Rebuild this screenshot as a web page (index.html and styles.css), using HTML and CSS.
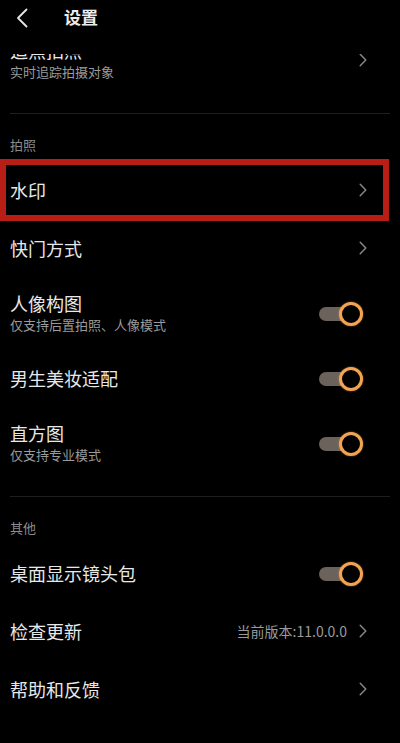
FILE: index.html
```html
<!DOCTYPE html>
<html lang="zh-CN">
<head>
    <meta charset="UTF-8">
    <meta name="viewport" content="width=device-width, initial-scale=1.0">
    <title>设置</title>
    <link rel="stylesheet" href="styles.css">
</head>
<body>

<div class="screen">
    <div class="topbar">
        <span class="back">
            <svg width="12" height="20" viewBox="0 0 12 20"><polyline points="10.5,1.5 2,10 10.5,18.5" fill="none" stroke="#e6e6e6" stroke-width="1.8" stroke-linecap="round" stroke-linejoin="round"/></svg>
        </span>
        <span class="title">设置</span>
    </div>

    <div class="list">
        <div class="section">
            <div class="row tall">
                <div class="text">
                    <div class="name">追焦拍照</div>
                    <div class="desc">实时追踪拍摄对象</div>
                </div>
                <span class="arrow"><svg width="8" height="14" viewBox="0 0 8 14"><polyline points="1.2,1.2 6.8,7 1.2,12.8" fill="none" stroke="#8a8a8a" stroke-width="1.4" stroke-linecap="round" stroke-linejoin="round"/></svg></span>
            </div>
        </div>

        <div class="section">
            <div class="section-title">拍照</div>
            <div class="row marked">
                <div class="text"><div class="name">水印</div></div>
                <span class="arrow"><svg width="8" height="14" viewBox="0 0 8 14"><polyline points="1.2,1.2 6.8,7 1.2,12.8" fill="none" stroke="#8a8a8a" stroke-width="1.4" stroke-linecap="round" stroke-linejoin="round"/></svg></span>
            </div>
            <div class="row">
                <div class="text"><div class="name">快门方式</div></div>
                <span class="arrow"><svg width="8" height="14" viewBox="0 0 8 14"><polyline points="1.2,1.2 6.8,7 1.2,12.8" fill="none" stroke="#8a8a8a" stroke-width="1.4" stroke-linecap="round" stroke-linejoin="round"/></svg></span>
            </div>
            <div class="row tall">
                <div class="text">
                    <div class="name">人像构图</div>
                    <div class="desc">仅支持后置拍照、人像模式</div>
                </div>
                <span class="switch"><span class="track"></span><span class="knob"></span></span>
            </div>
            <div class="row">
                <div class="text"><div class="name">男生美妆适配</div></div>
                <span class="switch"><span class="track"></span><span class="knob"></span></span>
            </div>
            <div class="row tall">
                <div class="text">
                    <div class="name">直方图</div>
                    <div class="desc">仅支持专业模式</div>
                </div>
                <span class="switch"><span class="track"></span><span class="knob"></span></span>
            </div>
        </div>

        <div class="section last">
            <div class="section-title">其他</div>
            <div class="row">
                <div class="text"><div class="name">桌面显示镜头包</div></div>
                <span class="switch"><span class="track"></span><span class="knob"></span></span>
            </div>
            <div class="row">
                <div class="text"><div class="name">检查更新</div></div>
                <span class="value">当前版本:11.0.0.0</span>
                <span class="arrow"><svg width="8" height="14" viewBox="0 0 8 14"><polyline points="1.2,1.2 6.8,7 1.2,12.8" fill="none" stroke="#8a8a8a" stroke-width="1.4" stroke-linecap="round" stroke-linejoin="round"/></svg></span>
            </div>
            <div class="row">
                <div class="text"><div class="name">帮助和反馈</div></div>
                <span class="arrow"><svg width="8" height="14" viewBox="0 0 8 14"><polyline points="1.2,1.2 6.8,7 1.2,12.8" fill="none" stroke="#8a8a8a" stroke-width="1.4" stroke-linecap="round" stroke-linejoin="round"/></svg></span>
            </div>
        </div>
    </div>
</div>

</body>
</html>
```

FILE: styles.css
```css
body {
    margin: 0;
    padding: 0;
    background-color: #000000;
    font-family: "Noto Sans CJK SC", "Noto Sans", sans-serif;
    color: #e8e8e8;
}

.screen {
    position: relative;
    width: 400px;
    height: 743px;
    overflow: hidden;
    background-color: #000000;
}

/* barre du haut, posée au-dessus de la liste qui défile */
.topbar {
    position: absolute;
    top: 0;
    left: 0;
    right: 0;
    height: 54px;
    background-color: #000000;
    z-index: 2;
    display: flex;
    align-items: flex-start;
    padding-top: 8px;
    box-sizing: border-box;
}

.back {
    display: flex;
    margin-left: 16px;
    height: 20px;
}

.title {
    margin-left: 36px;
    font-size: 17px;
    font-weight: 700;
    line-height: 20px;
    margin-top: -1px;
    color: #ececec;
}

.list {
    padding-top: 24px;
}

.section {
    padding-bottom: 17px;
    border-bottom: 1px solid #1f1f1f;
    margin: 0 10px;
}

.section.last {
    border-bottom: none;
}

.section-title {
    padding: 24px 0 9px 0;
    font-size: 13px;
    line-height: 14px;
    color: #8c8c8c;
}

.section .row {
    margin: 0 -10px;
}

.row {
    position: relative;
    display: flex;
    align-items: center;
    height: 58px;
    padding: 0 33px 0 10px;
}

.row.tall {
    height: 72px;
}

.text {
    flex: 1;
}

.name {
    font-size: 18px;
    line-height: 23px;
    color: #e8e8e8;
}

.desc {
    font-size: 13px;
    line-height: 19px;
    color: #9a9a9a;
}

.arrow {
    display: flex;
    width: 8px;
}

.value {
    font-size: 14px;
    color: #9a9a9a;
    margin-right: 12px;
}

/* cadre rouge d'annotation */
.row.marked::after {
    content: "";
    position: absolute;
    left: 0;
    right: 11px;
    top: -2px;
    bottom: -2px;
    border: 6px solid #b81d16;
}

.switch {
    position: relative;
    width: 44px;
    height: 24px;
    margin-right: 4px;
    margin-top: 1px;
}

.track {
    position: absolute;
    left: 0;
    top: 5px;
    width: 32px;
    height: 14px;
    border-radius: 7px;
    background-color: #6b635b;
}

.knob {
    position: absolute;
    right: 0;
    top: 0;
    width: 24px;
    height: 24px;
    box-sizing: border-box;
    border-radius: 50%;
    border: 3px solid #f2a452;
    background-color: #000000;
    box-shadow: 0 0 2px rgba(242, 164, 82, 0.6);
}
```
